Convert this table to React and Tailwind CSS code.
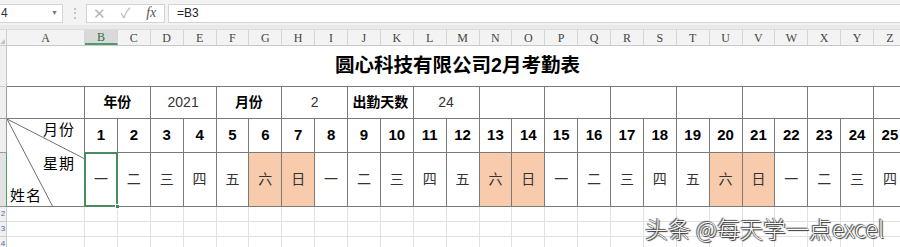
import React from "react";

const COLS = "BCDEFGHIJKLMNOPQRSTUVWXYZ".split("");
const DAYS = ["一", "二", "三", "四", "五", "六", "日"];

const row2 = [
  { t: "年份", b: true },
  { t: "2021" },
  { t: "月份", b: true },
  { t: "2" },
  { t: "出勤天数", b: true },
  { t: "24" },
  { t: "" },
  { t: "" },
  { t: "" },
  { t: "" },
  { t: "" },
  { t: "" },
  { t: "" },
];

const font = "font-['Liberation_Sans','Noto_Sans_CJK_SC',sans-serif]";

export default function App() {
  return (
    <div className={`w-[900px] h-[247px] overflow-hidden bg-white relative ${font}`}>
      {/* formula bar */}
      <div className="h-[25px] bg-[#f3f3f3] flex items-center gap-0 pt-[1px]">
        <div className="w-[63px] h-[19px] bg-white border border-[#d4d4d4] border-l-0 flex items-center justify-between pl-[1px] pr-[4px] text-[12px] text-[#333]">
          <span>4</span>
          <span className="text-[7px] text-[#777]">▼</span>
        </div>
        <div className="w-[23px] flex justify-center text-[#b0b0b0] text-[12px]">⋮</div>
        <div className="w-[79px] h-[19px] bg-white border border-[#d4d4d4] flex items-center text-[#b5b5b5]">
          <span className="w-[26px] text-center text-[15px] leading-none">✕</span>
          <span className="w-[26px] text-center text-[14px] leading-none">✓</span>
          <span className="w-[26px] text-center text-[14px] leading-none italic text-[#555] font-['Liberation_Serif',serif]">fx</span>
        </div>
        <div className="ml-[3px] flex-1 h-[19px] bg-white border border-[#d4d4d4] border-r-0 flex items-center pl-[8px] text-[12px] text-[#222]">
          =B3
        </div>
      </div>
      <div className="h-[5px] bg-[#e9e9e9] border-b border-[#dcdcdc]" />

      {/* column header row */}
      <div className="h-[16px] flex bg-[#f3f3f3] border-b border-[#c9c9c9] text-[12px] text-[#444] font-['Liberation_Serif',serif]">
        <div className="w-[7px] shrink-0 border-r border-[#cfcfcf] relative overflow-hidden">
          <div className="absolute right-[1px] bottom-[1px] w-0 h-0 border-l-[5px] border-l-transparent border-b-[5px] border-b-[#c4c4c4]" />
        </div>
        <div className="w-[78px] shrink-0 border-r border-[#d6d6d6] flex items-center justify-center">A</div>
        {COLS.map((c) => (
          <div
            key={c}
            className={`w-[32.875px] shrink-0 border-r border-[#d6d6d6] flex items-center justify-center ${
              c === "B" ? "bg-[#d9d9d9] border-b-2 border-b-[#4f9a69] text-[#2f6b45]" : ""
            }`}
          >
            {c}
          </div>
        ))}
      </div>

      {/* row 1: title */}
      <div className="h-[41px] flex">
        <div className="w-[7px] shrink-0 bg-[#f0f0f0] border-r border-b border-[#c8c8c8]" />
        <div className="flex-1 border-b border-[#7a7a7a] flex items-center justify-center pl-[8px] text-[19.5px] font-bold text-black">
          圆心科技有限公司2月考勤表
        </div>
      </div>

      {/* row 2 */}
      <div className="h-[32px] flex">
        <div className="w-[7px] shrink-0 bg-[#f0f0f0] border-r border-b border-[#9a9a9a]" />
        <div className="w-[78px] shrink-0 border-r border-b border-[#7a7a7a]" />
        {row2.map((c, i) => (
          <div
            key={i}
            className={`w-[65.75px] shrink-0 border-r border-b border-[#7a7a7a] flex items-center justify-center text-[14px] ${
              c.b ? "font-bold text-black" : "text-[#333]"
            }`}
          >
            {c.t}
          </div>
        ))}
      </div>

      {/* rows 3-4 */}
      <div className="flex">
        <div className="w-[7px] shrink-0 flex flex-col">
          <div className="h-[34px] bg-[#f0f0f0] border-r border-b border-[#9a9a9a]" />
          <div className="h-[54px] bg-[#e2e2e2] border-r border-r-[#4f9a69] border-b border-b-[#9a9a9a]" />
        </div>
        <div className="w-[78px] h-[88px] shrink-0 border-r border-b border-[#7a7a7a] relative font-['Noto_Sans_CJK_SC',sans-serif] text-[15px] text-black">
          <svg className="absolute inset-0" width="78" height="88" viewBox="0 0 78 88">
            <line x1="0" y1="0" x2="78" y2="40" stroke="#6f6f6f" strokeWidth="1" />
            <line x1="0" y1="0" x2="46" y2="88" stroke="#6f6f6f" strokeWidth="1" />
          </svg>
          <span className="absolute left-[36px] top-[1px] leading-[18px] tracking-[1px]">月份</span>
          <span className="absolute left-[36px] top-[35px] leading-[18px] tracking-[1px]">星期</span>
          <span className="absolute left-[3px] top-[67px] leading-[18px] tracking-[1px]">姓名</span>
        </div>
        <div className="flex flex-col">
          <div className="h-[34px] flex">
            {COLS.map((c, i) => (
              <div
                key={c}
                className="w-[32.875px] shrink-0 border-r border-b border-[#7a7a7a] flex items-center justify-center text-[15px] font-bold text-black"
              >
                {i + 1}
              </div>
            ))}
          </div>
          <div className="h-[54px] flex">
            {COLS.map((c, i) => {
              const d = i % 7;
              const wk = d === 5 || d === 6;
              return (
                <div
                  key={c}
                  className={`w-[32.875px] shrink-0 border-r border-b border-[#7a7a7a] flex items-center justify-center text-[14px] text-[#333] relative ${
                    wk ? "bg-[#f8cbad]" : ""
                  }`}
                >
                  {DAYS[d]}
                  {i === 0 && (
                    <>
                      <div className="absolute -left-[1px] -top-[1px] -right-[1px] -bottom-[1px] border-2 border-[#4a8c5f]" />
                      <div className="absolute -right-[3px] -bottom-[3px] w-[5px] h-[5px] bg-[#3f7f54] border border-white" />
                    </>
                  )}
                </div>
              );
            })}
          </div>
        </div>
      </div>

      {/* empty rows */}
      {["2", "3", "4"].map((n) => (
        <div key={n} className="h-[15px] flex">
          <div className="w-[7px] shrink-0 bg-[#f0f0f0] border-r border-b border-[#cfcfcf] text-[8px] leading-[14px] text-[#4a6fa5] overflow-hidden flex justify-center">
            <span>{n}</span>
          </div>
          <div className="w-[78px] shrink-0 border-r border-b border-[#e1e1e1]" />
          {COLS.map((c) => (
            <div key={c} className="w-[32.875px] shrink-0 border-r border-b border-[#e1e1e1]" />
          ))}
        </div>
      ))}

      {/* watermark */}
      <div className="absolute left-[645px] top-[215px] text-[23px] leading-[27px] font-light text-white font-['Noto_Sans_CJK_SC',sans-serif] whitespace-nowrap [text-shadow:0_0_1px_#000,1px_1px_1px_#333,-1px_-1px_1px_#555]">
        头条 @每天学一点excel
      </div>
    </div>
  );
}
